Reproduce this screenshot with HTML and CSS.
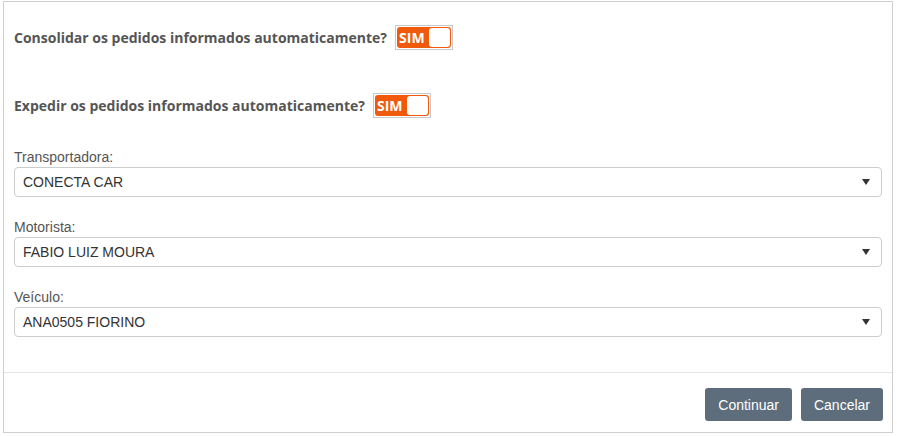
FILE: index.html
```html
<!DOCTYPE html>
<html lang="pt">
<head>
<meta charset="utf-8">
<link rel="stylesheet" href="styles.css">
</head>
<body>
<div class="modal">
  <div class="modal-body">
    <div class="question q1">
      <span class="q-text">Consolidar os pedidos informados automaticamente?</span>
      <span class="toggle"><span class="toggle-on"><span class="toggle-label">SIM</span><span class="knob"></span></span></span>
    </div>
    <div class="question q2">
      <span class="q-text">Expedir os pedidos informados automaticamente?</span>
      <span class="toggle"><span class="toggle-on"><span class="toggle-label">SIM</span><span class="knob"></span></span></span>
    </div>
    <div class="field">
      <div class="field-label">Transportadora:</div>
      <div class="select"><span>CONECTA CAR</span><span class="caret"></span></div>
    </div>
    <div class="field">
      <div class="field-label">Motorista:</div>
      <div class="select"><span>FABIO LUIZ MOURA</span><span class="caret"></span></div>
    </div>
    <div class="field">
      <div class="field-label">Veículo:</div>
      <div class="select"><span>ANA0505 FIORINO</span><span class="caret"></span></div>
    </div>
  </div>
  <div class="modal-footer">
    <button class="btn">Continuar</button>
    <button class="btn">Cancelar</button>
  </div>
</div>
</body>
</html>
```

FILE: styles.css
```css
html, body {
  margin: 0;
  padding: 0;
  background: #fff;
}
body {
  font-family: "Liberation Sans", Arial, sans-serif;
  font-size: 14px;
  color: #333;
}
.modal {
  margin: 1px 0 0 3px;
  width: 888px;
  height: 430px;
  border: 1px solid #cfcfcf;
  display: flex;
  flex-direction: column;
}
.modal-body {
  padding: 22px 10px 0 10px;
  flex: 1;
}
.question {
  display: flex;
  align-items: center;
  gap: 8px;
  height: 26px;
}
.q2 {
  margin-top: 42px;
}
.q-text {
  font-family: "Open Sans", sans-serif;
  font-weight: 700;
  font-size: 14px;
  color: #555;
  letter-spacing: 0;
}
.toggle {
  display: inline-block;
  border: 1px solid #c8c8c8;
  padding: 1px;
  width: 54px;
  height: 21px;
}
.toggle-on {
  display: flex;
  align-items: center;
  justify-content: space-between;
  background: #f05a0c;
  border-radius: 3px;
  height: 21px;
  padding: 0 1px 0 2px;
  box-sizing: border-box;
}
.toggle-label {
  font-family: "Open Sans", sans-serif;
  font-weight: 700;
  font-size: 14px;
  color: #fff;
  line-height: 21px;
}
.knob {
  width: 21px;
  height: 19px;
  background: #fff;
  border-radius: 3px;
}
.q2 + .field {
  margin-top: 30px;
}
.field + .field {
  margin-top: 21px;
}
.field-label {
  color: #555;
  font-size: 14px;
  line-height: 18px;
  margin-bottom: 1px;
}
.select {
  display: flex;
  align-items: center;
  justify-content: space-between;
  height: 30px;
  box-sizing: border-box;
  border: 1px solid #ccc;
  border-radius: 4px;
  padding: 0 11px 0 8px;
  color: #333;
  font-size: 14px;
}
.caret {
  width: 0;
  height: 0;
  border-left: 4px solid transparent;
  border-right: 4px solid transparent;
  border-top: 6px solid #333;
}
.modal-footer {
  border-top: 1px solid #e5e5e5;
  padding: 15px 9px 11px 0;
  display: flex;
  justify-content: flex-end;
  gap: 9px;
}
.btn {
  font-family: "Liberation Sans", Arial, sans-serif;
  font-size: 14px;
  color: #fff;
  background: #5e6d7c;
  border: none;
  border-radius: 3px;
  height: 33px;
  padding: 0 13px;
}
```
